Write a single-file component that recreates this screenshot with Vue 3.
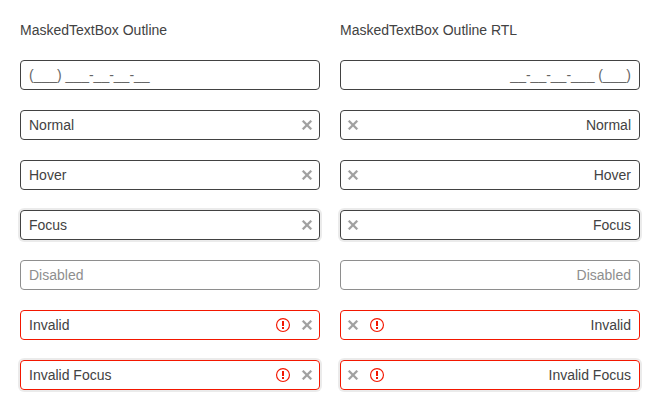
<script setup>
const columns = [
  { title: 'MaskedTextBox Outline', dir: 'ltr', mask: '(___) ___-__-__-__' },
  { title: 'MaskedTextBox Outline RTL', dir: 'rtl', mask: '(___) ___-__-__-__' },
]
const states = [
  { text: 'Normal', clear: true },
  { text: 'Hover', clear: true },
  { text: 'Focus', clear: true, cls: 'focus' },
  { text: 'Disabled', cls: 'disabled' },
  { text: 'Invalid', clear: true, cls: 'invalid' },
  { text: 'Invalid Focus', clear: true, cls: 'invalid focus' },
]
</script>

<template>
  <main class="grid">
    <section v-for="c in columns" :key="c.dir" class="column">
      <h1 class="title">{{ c.title }}</h1>
      <div class="box placeholder" :dir="c.dir"><span class="value">{{ c.mask }}</span></div>
      <div v-for="s in states" :key="s.text" class="box" :class="s.cls" :dir="c.dir">
        <span class="value">{{ s.text }}</span>
        <span v-if="s.text.startsWith('Invalid')" class="icon error">
          <svg viewBox="0 0 16 16" width="16" height="16">
            <circle cx="8" cy="8" r="6.45" fill="none" stroke="currentColor" stroke-width="1.15" />
            <path d="M7 4h2v5H7zM7 10h2v2H7z" fill="currentColor" />
          </svg>
        </span>
        <span v-if="s.clear" class="icon clear">
          <svg viewBox="0 0 16 16" width="16" height="16">
            <path d="M13 4.5L11.5 3 8 6.5 4.5 3 3 4.5 6.5 8 3 11.5 4.5 13 8 9.5l3.5 3.5 1.5-1.5L9.5 8z" fill="currentColor" stroke="currentColor" stroke-width="0.15" />
          </svg>
        </span>
      </div>
    </section>
  </main>
</template>

<style>
body { margin: 0; background: #fff; }
</style>

<style scoped>
.grid {
  display: grid;
  grid-template-columns: 300px 300px;
  gap: 20px;
  padding: 20px;
  font: 14px/20px "Liberation Sans", Arial, sans-serif;
  color: #424242;
}
.column { display: flex; flex-direction: column; gap: 20px; }
.title { margin: 0; font-size: 14px; font-weight: 400; line-height: 20px; }
.box {
  box-sizing: border-box;
  height: 30px;
  display: flex;
  align-items: center;
  border: 1px solid #424242;
  border-radius: 4px;
}
.value { flex: 1; padding: 0 8px; }
.placeholder .value { color: #666; }
.icon { display: flex; width: 24px; justify-content: center; }
.clear { color: #a0a0a0; }
.error { color: #f31700; }
.focus { box-shadow: 0 0 0 2px rgba(0, 0, 0, 0.08); }
.disabled { border-color: #8e8e8e; color: #8e8e8e; }
.invalid { border-color: #f31700; }
</style>
